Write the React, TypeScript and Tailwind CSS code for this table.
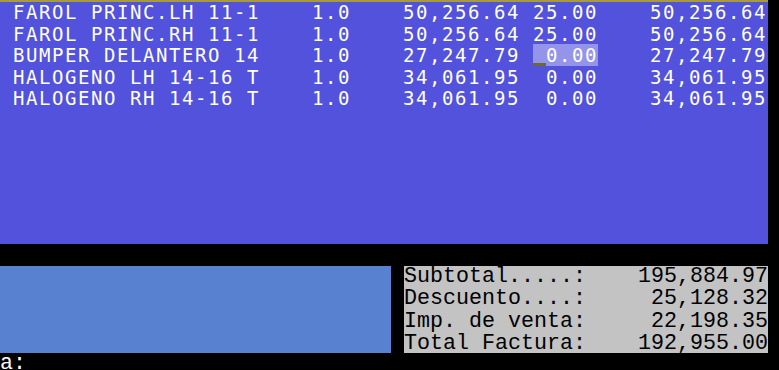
import React from "react";

type Row = { name: string; qty: string; price: string; disc: string; total: string; mark?: boolean };

const rows: Row[] = [
  { name: "FAROL PRINC.LH 11-1", qty: "1.0", price: "50,256.64", disc: "25.00", total: "50,256.64" },
  { name: "FAROL PRINC.RH 11-1", qty: "1.0", price: "50,256.64", disc: "25.00", total: "50,256.64" },
  { name: "BUMPER DELANTERO 14", qty: "1.0", price: "27,247.79", disc: "0.00", total: "27,247.79" },
  { name: "HALOGENO LH 14-16 T", qty: "1.0", price: "34,061.95", disc: "0.00", total: "34,061.95", mark: true },
  { name: "HALOGENO RH 14-16 T", qty: "1.0", price: "34,061.95", disc: "0.00", total: "34,061.95", mark: true },
];

const totals = [
  ["Subtotal.....:", "195,884.97"],
  ["Descuento....:", "25,128.32"],
  ["Imp. de venta:", "22,198.35"],
  ["Total Factura:", "192,955.00"],
];

const topFont = { fontFamily: '"DejaVu Sans Mono", "Liberation Mono", monospace' };
const botFont = { fontFamily: '"Liberation Mono", "DejaVu Sans Mono", monospace' };

export default function App() {
  return (
    <div className="w-[779px] h-[370px] bg-black overflow-hidden">
      <div className="w-[768px]">
        <div className="h-[2px] bg-[#a69c3e]" />
        <div
          className="h-[242px] bg-[#5252dc] text-white text-[19px] leading-[21.6px] tracking-[1.56px] whitespace-pre"
          style={topFont}
        >
          {rows.map((r, i) => (
            <div key={i} className="relative">
              {r.mark && <span className="absolute left-[-2px] bottom-[5px] w-[2px] h-[2px] bg-white" />}
              {" " + r.name.padEnd(19) + "    " + r.qty + "    " + r.price.padStart(9) + " "}
              {i === 2 ? (
                <span className="relative bg-[#9494ea]">
                  {r.disc.padStart(5)}
                  <span className="absolute left-0 bottom-[0px] w-[13px] h-[3px] bg-[#6e6a2c]" />
                </span>
              ) : (
                r.disc.padStart(5)
              )}
              {"    " + r.total.padStart(9)}
            </div>
          ))}
        </div>
      </div>
      <div className="h-[22px]" />
      <div className="flex h-[87px]">
        <div className="w-[391px] bg-[#5881d0]" />
        <div className="w-[13px]" />
        <div
          className="w-[364px] bg-[#c3c3c3] text-black text-[21.67px] leading-[22.3px] whitespace-pre overflow-hidden"
          style={botFont}
        >
          {totals.map(([l, v]) => (
            <div key={l}>{l + v.padStart(14)}</div>
          ))}
        </div>
      </div>
      <div className="text-white text-[21.67px] leading-[22.7px] whitespace-pre" style={botFont}>
        a:
      </div>
    </div>
  );
}
